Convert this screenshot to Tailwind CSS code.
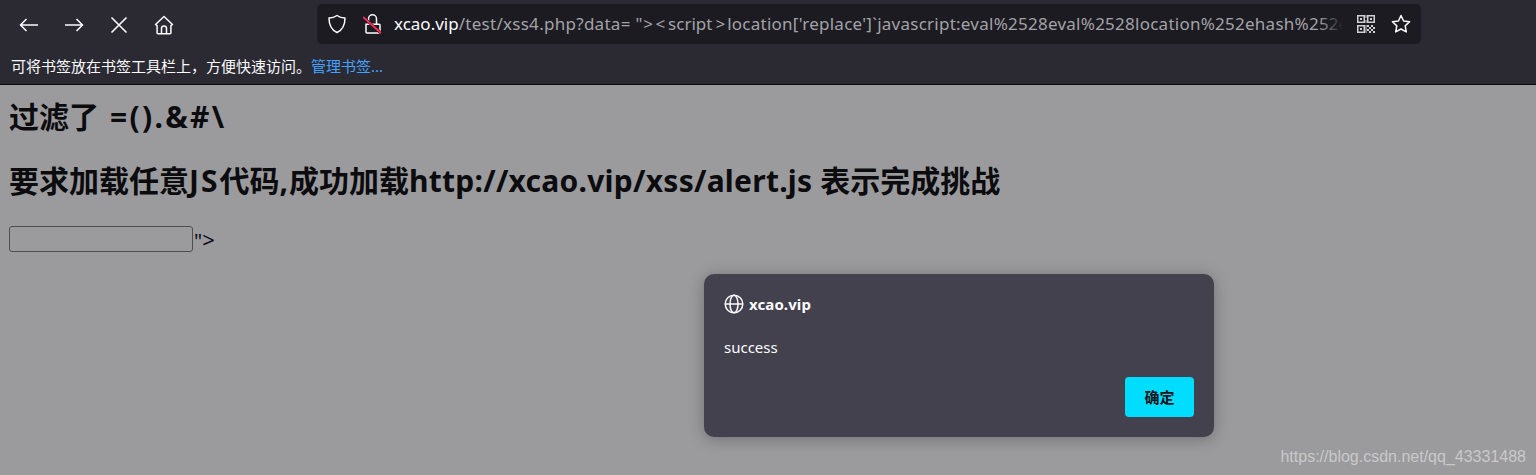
<!DOCTYPE html>
<html lang="zh-CN">
<head>
<meta charset="utf-8">
<title>xcao.vip</title>
<script src="https://cdn.jsdelivr.net/npm/@tailwindcss/browser@4"></script>
</head>
<body class="h-[475px] w-[1536px] overflow-hidden bg-white font-['Noto_Sans','Noto_Sans_CJK_SC',sans-serif]">
  <header class="flex h-[85px] flex-col border-b border-[#0c0c0d] bg-[#2b2a33] text-white">
    <div class="flex h-[48px] items-center">
      <nav class="flex w-[317px] items-center pt-[1px] pl-[11px] text-[#fbfbfe]">
        <button class="flex h-9 w-9 items-center justify-center">
          <svg class="h-5 w-5" viewBox="0 0 20 20" fill="none" stroke="currentColor" stroke-width="1.5"><path d="M19 10H1.500M7.500 4l-6 6 6 6"/></svg>
        </button>
        <button class="ml-[9px] flex h-9 w-9 items-center justify-center">
          <svg class="h-5 w-5" viewBox="0 0 20 20" fill="none" stroke="currentColor" stroke-width="1.5"><path d="M1 10h17.500M12.500 4l6 6-6 6"/></svg>
        </button>
        <button class="ml-[9px] flex h-9 w-9 items-center justify-center">
          <svg class="h-5 w-5" viewBox="0 0 20 20" fill="none" stroke="currentColor" stroke-width="1.6"><path d="m2.500 2.500 15 15M17.500 2.500l-15 15"/></svg>
        </button>
        <button class="ml-[9px] flex h-9 w-9 items-center justify-center">
          <svg class="h-5 w-5" viewBox="0 0 20 20" fill="none" stroke="currentColor" stroke-width="1.5" stroke-linejoin="round"><path d="M1.500 9.500 10 1.500l8.500 8-1.600 1.200V18a.8.8 0 0 1-.8.8H3.900a.8.8 0 0 1-.8-.8v-7.300z"/><path d="M7.500 18.500v-5a2.500 2.500 0 0 1 5 0v5"/></svg>
        </button>
      </nav>
      <div class="flex h-10 w-[1104px] items-center rounded-[5px] bg-[#1c1b22] pl-[10px]">
        <svg class="h-5 w-5 shrink-0 text-[#fbfbfe]" viewBox="0 0 20 20" fill="none" stroke="currentColor" stroke-width="1.500" stroke-linejoin="round"><path d="M10 1.500c2.400 1.700 5 2.400 8 2.500 0 7.500-2.500 12-8 14.500C4.500 16 2 11.500 2 4c3-.1 5.600-.8 8-2.500z"/></svg>
        <svg class="ml-[16px] h-5 w-5 shrink-0 text-[#fbfbfe]" viewBox="0 0 20 20" fill="none" stroke-width="1.500"><path stroke="currentColor" d="M5.500 10V4.800a4 4 0 0 1 8 0V10M3 10.300h13.200a.8.8 0 0 1 .8.8v7a.8.8 0 0 1-.8.8H3.800a.8.8 0 0 1-.8-.8z"/><path stroke="#1c1b22" stroke-width="3" d="M0 3l18 16"/><path stroke="#ff2a55" stroke-width="1.700" d="M0 3l18 16"/></svg>
        <div class="relative ml-[11px] min-w-0 flex-1 overflow-hidden text-[17px] leading-[40px] whitespace-nowrap text-[#a3a3a6]"><span class="text-[#fbfbfe]">xcao.vip</span><span class="tracking-[0.28px]">/test/xss4.php?data</span><span class="tracking-[5px]">=</span><span class="tracking-[1px]">"</span><span class="tracking-[2.300px]">&gt;</span><span class="tracking-[3px]">&lt;</span>script<span class="ml-[3px] tracking-[2px]">&gt;</span><span class="tracking-[0.25px]">location['replace']`javascript:eval%2528eval%2528location%252ehash%252e</span><span class="absolute inset-y-0 right-0 w-[24px] bg-gradient-to-r from-transparent to-[#1c1b22]"></span></div>
        <svg class="ml-[14px] h-[18px] w-[18px] shrink-0 text-[#d0d0d2]" viewBox="0 0 18 18" fill="currentColor"><path fill-rule="evenodd" d="M0 0h8v8H0zm1.500 1.500v5h5v-5zM10 0h8v8h-8zm1.500 1.500v5h5v-5zM0 10h8v8H0zm1.500 1.500v5h5v-5z"/><path d="M3 3h2v2H3zM13 3h2v2h-2zM3 13h2v2H3zM8.500 0h1v3h-1zM8.500 5h1v3h-1zM10 10h2v2h-2zM14 10h2v2h-2zM12 12h2v2h-2zM16 12h2v2h-2zM10 14h2v2h-2zM14 14h2v2h-2zM12 16h2v2h-2zM16 16h2v2h-2zM8.500 10h1v8h-1z"/></svg>
        <svg class="ml-[16px] mr-[10px] h-5 w-5 shrink-0 text-[#fbfbfe]" viewBox="0 0 20 20" fill="none" stroke="currentColor" stroke-width="1.500" stroke-linejoin="round"><path d="m10 1.500 2.600 5.500 6 .8-4.400 4.100 1.100 6L10 15l-5.300 2.900 1.100-6L1.400 7.800l6-.8z"/></svg>
      </div>
    </div>
    <div class="flex h-[36px] items-center pt-[1px] pl-[11px] text-[15px] leading-none text-[#fbfbfe]">
      <span>可将书签放在书签工具栏上，方便快速访问。</span><a class="text-[#45a1ff]">管理书签...</a>
    </div>
  </header>

  <main class="relative h-[390px]">
    <div class="px-[9px] text-[#000]">
      <h2 class="pt-[11px] text-[30px] leading-[42px] font-bold">过滤了<span class="ml-[1px] tracking-[2.300px]"> =().&amp;#\</span></h2>
      <h2 class="mt-[22px] text-[30px] leading-[42px] font-bold">要求加载任意<span class="tracking-[2px]">JS</span>代码<span class="tracking-[1px]">,</span>成功加载<span class="tracking-[0.25px]">http://xcao.vip/xss/alert.js</span> 表示完成挑战</h2>
      <div class="mt-[24px] flex h-[26px] items-center text-[20px] leading-none text-[#00001a]">
        <input type="text" class="h-[26px] w-[184px] rounded-[3px] border border-[#777] bg-white"><span class="ml-[1px]">"<span class="text-[22px]">&gt;</span></span>
      </div>
    </div>
    <div class="absolute inset-0 bg-[#1c1b22]/44"></div>
    <div class="absolute top-[189px] left-[704px] flex h-[163px] w-[510px] flex-col rounded-[10px] bg-[#42414d] px-[20px] pt-[20px] text-[#fbfbfe] shadow-[0_2px_16px_rgba(0,0,0,0.28)]">
      <div class="flex h-[20px] items-center">
        <svg class="h-[20px] w-[20px] shrink-0" viewBox="0 0 20 20" fill="none" stroke="currentColor" stroke-width="1.500"><circle cx="10" cy="10" r="8.800"/><ellipse cx="10" cy="10" rx="4" ry="8.800"/><path d="M1.300 10h17.400"/></svg>
        <span class="ml-[5px] text-[15px] leading-none font-bold tracking-[0.1px]">xcao.vip</span>
      </div>
      <p class="mt-[23px] text-[15px] leading-[20px]">success</p>
      <div class="mt-[20px] flex justify-end">
        <button class="h-10 w-[69px] rounded-[4px] bg-[#00ddff] text-[15px] font-bold text-[#15141a]">确定</button>
      </div>
    </div>
    <div class="absolute right-[10px] bottom-[8px] font-['Liberation_Sans',sans-serif] text-[16px] leading-[20px] text-[#c9c9c9]">https://blog.csdn.net/qq_43331488</div>
  </main>
</body>
</html>
